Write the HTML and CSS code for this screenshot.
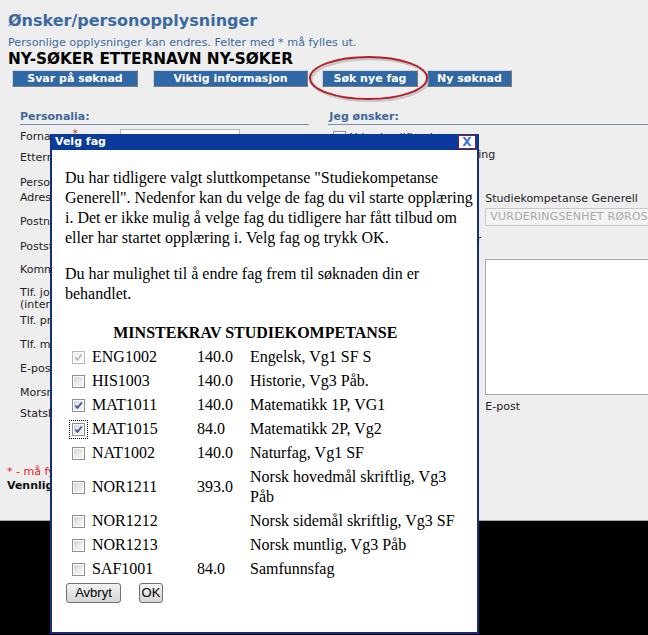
FILE: index.html
```html
<!DOCTYPE html>
<html lang="no">
<head>
<meta charset="utf-8">
<title>Ønsker/personopplysninger</title>
<link rel="stylesheet" href="styles.css">
</head>
<body>
<svg class="defs" aria-hidden="true">
  <defs>
    <linearGradient id="cbfill" x1="0" y1="0" x2="1" y2="1">
      <stop offset="0" stop-color="#d6d6d6"/>
      <stop offset="1" stop-color="#fafafa"/>
    </linearGradient>
    <linearGradient id="cbfillon" x1="0" y1="0" x2="1" y2="1">
      <stop offset="0" stop-color="#cfd6e6"/>
      <stop offset="1" stop-color="#f6f8fc"/>
    </linearGradient>
    <linearGradient id="cbfilloff" x1="0" y1="0" x2="1" y2="1">
      <stop offset="0" stop-color="#ececec"/>
      <stop offset="1" stop-color="#fbfbfb"/>
    </linearGradient>
  </defs>
</svg>

<div class="page">
  <header class="head">
    <h1 class="title">Ønsker/personopplysninger</h1>
    <p class="intro">Personlige opplysninger kan endres. Felter med * må fylles ut.</p>
    <h2 class="name">NY-SØKER ETTERNAVN NY-SØKER</h2>
    <nav class="actions">
      <button class="act act-svar">Svar på søknad</button>
      <button class="act act-info">Viktig informasjon</button>
      <button class="act act-fag">Søk nye fag</button>
      <button class="act act-ny">Ny søknad</button>
    </nav>
  </header>

  <svg class="mark" width="130" height="52" viewBox="0 0 130 52" aria-hidden="true">
    <ellipse cx="64" cy="27" rx="58.5" ry="21" fill="none" stroke="#9a9a9a" stroke-opacity="0.45" stroke-width="2.5"/>
    <ellipse cx="62.5" cy="25" rx="58.5" ry="21" fill="none" stroke="#b3202a" stroke-width="2"/>
  </svg>

  <div class="cols">
    <section class="col-left">
      <h3 class="sec">Personalia:</h3>
      <div class="fields">
        <div class="lbl">Fornavn <span class="req">*</span><input class="inp" type="text"></div>
        <div class="lbl">Etternavn</div>
        <div class="lbl">Personnummer</div>
        <div class="lbl">Adresse</div>
        <div class="lbl">Postnr</div>
        <div class="lbl">Poststed</div>
        <div class="lbl">Kommune</div>
        <div class="lbl">Tlf. jobb<br>(internasjonal)</div>
        <div class="lbl">Tlf. privat</div>
        <div class="lbl">Tlf. mobil</div>
        <div class="lbl">E-post</div>
        <div class="lbl">Morsmål</div>
        <div class="lbl">Statsborgerskap</div>
      </div>
    </section>
    <section class="col-right">
      <h3 class="sec">Jeg ønsker:</h3>
      <div class="opt">
        <svg class="cb" width="13" height="13" viewBox="0 0 13 13"><rect x=".5" y=".5" width="12" height="12" fill="#fff" stroke="#8f8f8f"/><rect x="2" y="2" width="9" height="9" fill="url(#cbfill)"/></svg>
        <span>Yrkeskvalifisering</span>
      </div>
      <div class="peek peek-a">Fullføre opplæring</div>
      <div class="sub-lbl sub-studie">Studiekompetanse Generell</div>
      <div class="sel">VURDERINGSENHET RØROS</div>
      <div class="peek peek-b">Kommentar</div>
      <div class="area"></div>
      <div class="sub-lbl sub-epost">E-post</div>
    </section>
  </div>

  <p class="note">* - må fylles ut</p>
  <p class="sign">Vennlig hilsen</p>
</div>

<div class="dialog" role="dialog" aria-label="Velg fag">
  <div class="dlg-title">Velg fag<span class="dlg-close">X</span></div>
  <div class="dlg-body">
    <p class="dlg-p">Du har tidligere valgt sluttkompetanse "Studiekompetanse<br>Generell". Nedenfor kan du velge de fag du vil starte opplæring<br>i. Det er ikke mulig å velge fag du tidligere har fått tilbud om<br>eller har startet opplæring i. Velg fag og trykk OK.</p>
    <p class="dlg-p dlg-p-last">Du har mulighet til å endre fag frem til søknaden din er<br>behandlet.</p>
    <table class="fag">
      <caption>MINSTEKRAV STUDIEKOMPETANSE</caption>
      <tbody>
        <tr>
          <td class="c-cb"><svg class="cb" width="13" height="13" viewBox="0 0 13 13"><rect x=".5" y=".5" width="12" height="12" fill="#fff" stroke="#b8b8b8"/><rect x="2" y="2" width="9" height="9" fill="url(#cbfilloff)"/><path d="M3.2 6.5 5.4 8.9 9.8 3.6" fill="none" stroke="#b4b4b4" stroke-width="1.6"/></svg></td>
          <td class="c-code">ENG1002</td><td class="c-num">140.0</td><td class="c-desc">Engelsk, Vg1 SF S</td>
        </tr>
        <tr>
          <td class="c-cb"><svg class="cb" width="13" height="13" viewBox="0 0 13 13"><rect x=".5" y=".5" width="12" height="12" fill="#fff" stroke="#8f8f8f"/><rect x="2" y="2" width="9" height="9" fill="url(#cbfill)"/></svg></td>
          <td class="c-code">HIS1003</td><td class="c-num">140.0</td><td class="c-desc">Historie, Vg3 Påb.</td>
        </tr>
        <tr>
          <td class="c-cb"><svg class="cb" width="13" height="13" viewBox="0 0 13 13"><rect x=".5" y=".5" width="12" height="12" fill="#fff" stroke="#8f8f8f"/><rect x="2" y="2" width="9" height="9" fill="url(#cbfillon)"/><path d="M3.2 6.5 5.4 8.9 9.8 3.6" fill="none" stroke="#43558f" stroke-width="1.7"/></svg></td>
          <td class="c-code">MAT1011</td><td class="c-num">140.0</td><td class="c-desc">Matematikk 1P, VG1</td>
        </tr>
        <tr>
          <td class="c-cb"><svg class="cb cb-focus" width="13" height="13" viewBox="0 0 13 13"><rect x=".5" y=".5" width="12" height="12" fill="#fff" stroke="#8f8f8f"/><rect x="2" y="2" width="9" height="9" fill="url(#cbfillon)"/><path d="M3.2 6.5 5.4 8.9 9.8 3.6" fill="none" stroke="#43558f" stroke-width="1.7"/></svg></td>
          <td class="c-code">MAT1015</td><td class="c-num">84.0</td><td class="c-desc">Matematikk 2P, Vg2</td>
        </tr>
        <tr>
          <td class="c-cb"><svg class="cb" width="13" height="13" viewBox="0 0 13 13"><rect x=".5" y=".5" width="12" height="12" fill="#fff" stroke="#8f8f8f"/><rect x="2" y="2" width="9" height="9" fill="url(#cbfill)"/></svg></td>
          <td class="c-code">NAT1002</td><td class="c-num">140.0</td><td class="c-desc">Naturfag, Vg1 SF</td>
        </tr>
        <tr>
          <td class="c-cb"><svg class="cb" width="13" height="13" viewBox="0 0 13 13"><rect x=".5" y=".5" width="12" height="12" fill="#fff" stroke="#8f8f8f"/><rect x="2" y="2" width="9" height="9" fill="url(#cbfill)"/></svg></td>
          <td class="c-code">NOR1211</td><td class="c-num">393.0</td><td class="c-desc">Norsk hovedmål skriftlig, Vg3<br>Påb</td>
        </tr>
        <tr>
          <td class="c-cb"><svg class="cb" width="13" height="13" viewBox="0 0 13 13"><rect x=".5" y=".5" width="12" height="12" fill="#fff" stroke="#8f8f8f"/><rect x="2" y="2" width="9" height="9" fill="url(#cbfill)"/></svg></td>
          <td class="c-code">NOR1212</td><td class="c-num"></td><td class="c-desc">Norsk sidemål skriftlig, Vg3 SF</td>
        </tr>
        <tr>
          <td class="c-cb"><svg class="cb" width="13" height="13" viewBox="0 0 13 13"><rect x=".5" y=".5" width="12" height="12" fill="#fff" stroke="#8f8f8f"/><rect x="2" y="2" width="9" height="9" fill="url(#cbfill)"/></svg></td>
          <td class="c-code">NOR1213</td><td class="c-num"></td><td class="c-desc">Norsk muntlig, Vg3 Påb</td>
        </tr>
        <tr>
          <td class="c-cb"><svg class="cb" width="13" height="13" viewBox="0 0 13 13"><rect x=".5" y=".5" width="12" height="12" fill="#fff" stroke="#8f8f8f"/><rect x="2" y="2" width="9" height="9" fill="url(#cbfill)"/></svg></td>
          <td class="c-code">SAF1001</td><td class="c-num">84.0</td><td class="c-desc">Samfunnsfag</td>
        </tr>
      </tbody>
    </table>
    <div class="dlg-actions">
      <button class="btn btn-avbryt">Avbryt</button>
      <button class="btn btn-ok">OK</button>
    </div>
  </div>
</div>
</body>
</html>
```

FILE: styles.css
```css
html, body {
  margin: 0;
  padding: 0;
  background: #000;
}

body {
  font-family: "DejaVu Sans", Verdana, sans-serif;
  color: #222;
  position: relative;
  height: 635px;
  overflow: hidden;
}

.defs {
  position: absolute;
  width: 0;
  height: 0;
}

.page {
  position: relative;
  background: #eeeeee;
  height: 521px;
  border-bottom: 1px solid #a6a6a6;
  padding-top: 11px;
  box-sizing: border-box;
}

.head {
  padding-left: 8px;
}

.title {
  margin: 0;
  font-size: 16px;
  line-height: 20px;
  font-weight: bold;
  color: #3a6aa0;
}

.intro {
  margin: 4.5px 0 0;
  font-size: 11.2px;
  line-height: 13px;
  color: #3a6aa0;
}

.name {
  margin: 2.5px 0 0;
  font-size: 15.3px;
  line-height: 17px;
  font-weight: bold;
  color: #000;
}

.actions {
  margin-top: 2px;
  padding-left: 4px;
  display: flex;
  gap: 15px;
}

.act {
  height: 17px;
  padding: 0;
  margin: 0;
  background: #2f68a5;
  color: #fff;
  font-family: "DejaVu Sans", Verdana, sans-serif;
  font-size: 11px;
  font-weight: bold;
  line-height: 13px;
  border: 1px solid;
  border-color: #d4d4d4 #7c7c7c #7c7c7c #d4d4d4;
  box-sizing: border-box;
}

.act-svar { width: 126px; }
.act-info { width: 155px; }
.act-fag { width: 96px; margin-left: -1px; }
.act-ny { width: 85px; margin-left: -6px; }

.mark {
  position: absolute;
  left: 306px;
  top: 53px;
}

.cols {
  margin-top: 23px;
  padding-left: 20px;
  display: flex;
  gap: 19px;
}

.col-left {
  width: 291px;
}

.col-right {
  flex: 1;
}

.sec {
  margin: 0;
  font-size: 11px;
  line-height: 13px;
  font-weight: bold;
  color: #40699b;
  padding-bottom: 1px;
  border-bottom: 1px solid #7b8fa8;
}

.col-right .sec {
  padding-left: 1px;
}

.fields {
  margin-top: 3px;
  display: grid;
  grid-template-rows: 24px 25px 15px 24px 25px 23px 23px 28px 24px 24px 24px 21px 12px;
  font-size: 11px;
  line-height: 12px;
}

.lbl {
  position: relative;
  color: #222;
}

.req {
  color: #e0201c;
  font-size: 10px;
  vertical-align: 3px;
  margin-left: 5px;
}

.inp {
  position: absolute;
  left: 100px;
  top: 1px;
  width: 120px;
  height: 18px;
  box-sizing: border-box;
  border: 1px solid #b5b5b5;
  background: #fff;
  margin: 0;
  padding: 0;
}

.opt {
  margin-top: 6px;
  padding-left: 5px;
  display: flex;
  align-items: center;
  gap: 4px;
  height: 13px;
  font-size: 11px;
}

.peek {
  font-size: 11px;
  line-height: 12px;
  text-align: right;
  color: #222;
}

.peek-a {
  margin-top: 5px;
  width: 167px;
}

.peek-b {
  margin-top: 8px;
  width: 153px;
}

.sub-lbl {
  margin-left: 157px;
  font-size: 11px;
  line-height: 12px;
  color: #222;
}

.sub-studie { margin-top: 32px; }
.sub-epost { margin-top: 6px; }

.sel {
  margin: 3px 0 0 157px;
  height: 18px;
  box-sizing: border-box;
  border: 1px solid #c9c9c9;
  border-right: 0;
  border-radius: 2px 0 0 2px;
  background: #f3f3f3;
  color: #a9a9a9;
  font-size: 11px;
  line-height: 16px;
  padding-left: 4px;
  letter-spacing: 0.2px;
  white-space: nowrap;
}

.area {
  margin: 13px 0 0 157px;
  height: 136px;
  box-sizing: border-box;
  border: 1px solid #a9a9a9;
  border-right: 0;
  background: #fff;
}

.note {
  margin: 46px 0 0;
  padding-left: 7px;
  font-size: 11px;
  line-height: 12px;
  color: #e0201c;
}

.sign {
  margin: 2px 0 0;
  padding-left: 7px;
  font-size: 11px;
  line-height: 12px;
  font-weight: bold;
  color: #111;
}

/* Dialog */
.dialog {
  position: absolute;
  left: 50px;
  top: 134px;
  width: 429px;
  height: 500px;
  box-sizing: border-box;
  border: 2px solid #142f73;
  border-top: 0;
  background: #fff;
}

.dlg-title {
  position: relative;
  height: 16px;
  margin: 0 -1px;
  background: #0a3b9c;
  color: #fff;
  font-size: 11px;
  font-weight: bold;
  line-height: 16px;
  padding-left: 4px;
}

.dlg-close {
  position: absolute;
  right: 2px;
  top: 1px;
  width: 18px;
  height: 14px;
  box-sizing: border-box;
  border: 1px solid #8c1b1b;
  background: #fff;
  color: #3d72d6;
  font-size: 12px;
  line-height: 12px;
  text-align: center;
}

.dlg-body {
  padding: 18px 0 0 13px;
  font-family: "Liberation Serif", "Times New Roman", serif;
  font-size: 16px;
  color: #000;
}

.dlg-p {
  margin: 0 0 16px;
  line-height: 20px;
  white-space: nowrap;
}

.dlg-p-last {
  margin-bottom: 19px;
}

.fag {
  margin-left: 3px;
  border-collapse: collapse;
  border-spacing: 0;
}

.fag caption {
  font-weight: bold;
  line-height: 20px;
  padding-bottom: 2px;
  padding-right: 12px;
}

.fag td {
  padding: 2px 0;
  line-height: 20px;
  vertical-align: middle;
}

.c-cb {
  width: 24px;
  box-sizing: border-box;
}

.fag td.c-cb {
  padding-left: 4px;
}

.c-code { width: 105px; }
.c-num { width: 53px; }
.c-desc { width: 202px; white-space: nowrap; }

.cb {
  display: block;
}

.cb-focus {
  outline: 1px dotted #000;
  outline-offset: 2px;
}

.dlg-actions {
  margin-top: 2px;
  padding-left: 1px;
  display: flex;
  gap: 18px;
}

.btn {
  height: 20px;
  padding: 0;
  margin: 0;
  box-sizing: border-box;
  border: 1px solid #707070;
  border-radius: 3px;
  background: linear-gradient(#f3f3f3, #e4e4e4 50%, #d6d6d6);
  font-family: "Liberation Sans", Arial, sans-serif;
  font-size: 13px;
  line-height: 18px;
  color: #000;
}

.btn-avbryt { width: 55px; }
.btn-ok { width: 24px; }
```
